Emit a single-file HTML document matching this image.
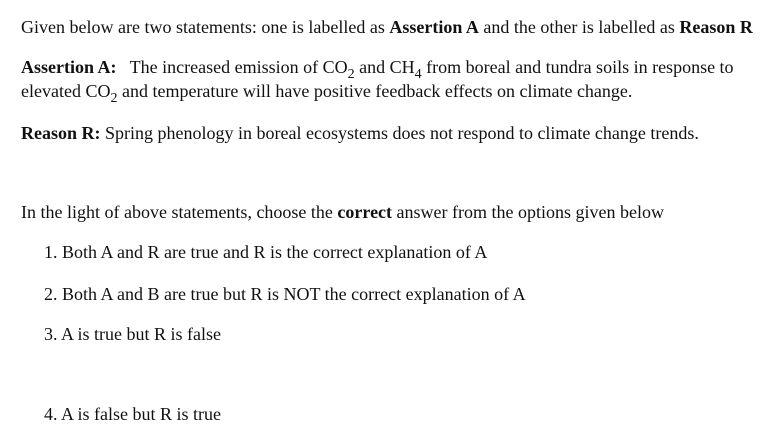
<!DOCTYPE html>
<html><head><style>
body{margin:0;background:#fff;font-family:"Liberation Serif",serif;font-size:18px;color:#111;}
.l{position:absolute;left:21px;white-space:nowrap;line-height:24px;}
.o{left:44px;}
sub{font-size:14px;vertical-align:-5px;line-height:0;}
</style></head><body>
<div class="l" style="top:15px">Given below are two statements: one is labelled as <b>Assertion A</b> and the other is labelled as <b>Reason R</b></div>
<div class="l" style="top:55px"><b>Assertion A:</b>&nbsp;&nbsp; The increased emission of CO<sub>2</sub> and CH<sub>4</sub> from boreal and tundra soils in response to<br>elevated CO<sub>2</sub> and temperature will have positive feedback effects on climate change.</div>
<div class="l" style="top:121px"><b>Reason R:</b> Spring phenology in boreal ecosystems does not respond to climate change trends.</div>
<div class="l" style="top:200px">In the light of above statements, choose the <b>correct</b> answer from the options given below</div>
<div class="l o" style="top:240px">1. Both A and R are true and R is the correct explanation of A</div>
<div class="l o" style="top:282px">2. Both A and B are true but R is NOT the correct explanation of A</div>
<div class="l o" style="top:322px">3. A is true but R is false</div>
<div class="l o" style="top:402px">4. A is false but R is true</div>
</body></html>
